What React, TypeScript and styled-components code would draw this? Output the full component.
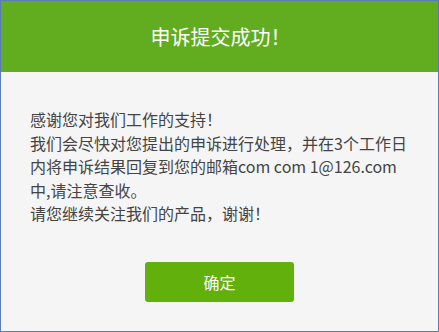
import styled, { createGlobalStyle } from "styled-components";

const GlobalStyle = createGlobalStyle`
  html, body {
    margin: 0;
    padding: 0;
    background: #f5f5f5;
  }
  * {
    box-sizing: border-box;
    text-spacing-trim: space-all;
  }
`;

const Frame = styled.div`
  width: 439px;
  height: 332px;
  display: flex;
  flex-direction: column;
  border: 1px solid #5b7eb2;
  background: #f5f5f5;
  font-family: "Noto Sans CJK SC", "Liberation Sans", sans-serif;
`;

const Header = styled.div`
  height: 71px;
  display: flex;
  align-items: center;
  justify-content: center;
  padding-left: 2px;
  background: #62ad1f;
  color: #ffffff;
  font-size: 20px;
`;

const Body = styled.div`
  flex: 1;
  display: flex;
  flex-direction: column;
  padding: 36px 0 0 29px;
`;

const Message = styled.div`
  color: #444444;
  font-size: 16px;
  line-height: 23.5px;
`;

const Line = styled.div`
  white-space: nowrap;
`;

const Actions = styled.div`
  display: flex;
  justify-content: center;
  margin-top: 36px;
  padding-right: 29px;
`;

const ConfirmButton = styled.button`
  width: 149px;
  height: 40px;
  border: none;
  border-radius: 3px;
  background: #62b00c;
  color: #ffffff;
  font-family: inherit;
  font-size: 16px;
  cursor: pointer;
  &:hover {
    background: #56a005;
  }
`;

export default function App() {
  return (
    <>
      <GlobalStyle />
      <Frame>
        <Header>申诉提交成功！</Header>
        <Body>
          <Message>
            <Line>感谢您对我们工作的支持！</Line>
            <Line>我们会尽快对您提出的申诉进行处理，并在3个工作日</Line>
            <Line>内将申诉结果回复到您的邮箱com com 1@126.com</Line>
            <Line>中,请注意查收。</Line>
            <Line>请您继续关注我们的产品，谢谢！</Line>
          </Message>
          <Actions>
            <ConfirmButton>确定</ConfirmButton>
          </Actions>
        </Body>
      </Frame>
    </>
  );
}
